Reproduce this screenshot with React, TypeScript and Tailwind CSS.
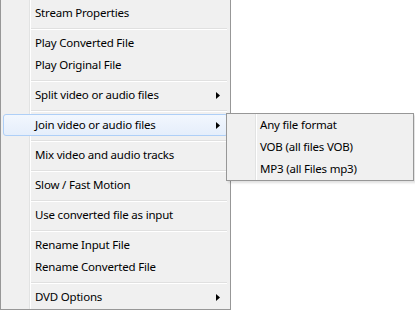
const items: (string | null)[] = [
  'Stream Properties',
  null,
  'Play Converted File',
  'Play Original File',
  null,
  'Split video or audio files>',
  null,
  'Join video or audio files>*',
  null,
  'Mix video and audio tracks',
  null,
  'Slow / Fast Motion',
  null,
  'Use converted file as input',
  null,
  'Rename Input File',
  'Rename Converted File',
  null,
  'DVD Options>',
]

const subItems = ['Any file format', 'VOB (all files VOB)', 'MP3 (all Files mp3)']

function Arrow() {
  return (
    <svg width="4" height="7" viewBox="0 0 4 7" className="absolute right-[7px] top-[7px]">
      <path d="M0 0 L4 3.5 L0 7 Z" fill="#000" />
    </svg>
  )
}

function Item({ label }: { label: string }) {
  const hasSub = label.includes('>')
  const active = label.endsWith('*')
  const text = label.replace('>', '').replace('*', '')
  return (
    <div className="relative h-[22px] px-[2px]">
      <div
        className={
          active
            ? 'relative flex h-full items-center rounded-[3px] border border-[#aecff7] bg-[linear-gradient(to_bottom,#f2f7fe,#e5eefb)] pl-[31px]'
            : 'relative flex h-full items-center border border-transparent pl-[31px]'
        }
      >
        <span>{text}</span>
        {hasSub && <Arrow />}
      </div>
    </div>
  )
}

function Separator() {
  return (
    <div className="h-[8px] pl-[30px] pr-[3px] pt-[4px]">
      <div className="h-[1px] bg-[#e0e0e0]" />
      <div className="h-[1px] bg-white" />
    </div>
  )
}

export default function App() {
  return (
    <div className="relative h-[311px] w-[415px] overflow-hidden bg-white font-['Noto_Sans',sans-serif] text-[11.5px] tracking-[-0.2px] text-black">
      <div className="w-[231px] border-x border-b border-[#979797] bg-[#f0f0f0] bg-[linear-gradient(to_right,transparent_28px,#e2e3e3_28px,#e2e3e3_29px,#ffffff_29px,#ffffff_30px,transparent_30px)] pb-[1px] pt-[2px]">
        {items.map((it, i) => (it === null ? <Separator key={i} /> : <Item key={i} label={it} />))}
      </div>

      <div className="absolute left-[226px] top-[113px] w-[188px] border border-[#979797] bg-[#f0f0f0] bg-[linear-gradient(to_right,transparent_28px,#e2e3e3_28px,#e2e3e3_29px,#ffffff_29px,#ffffff_30px,transparent_30px)] shadow-[2px_2px_2px_rgba(0,0,0,0.12)]">
        {subItems.map((s) => (
          <div key={s} className="flex h-[22px] items-center pl-[33px]">
            {s}
          </div>
        ))}
      </div>
    </div>
  )
}
